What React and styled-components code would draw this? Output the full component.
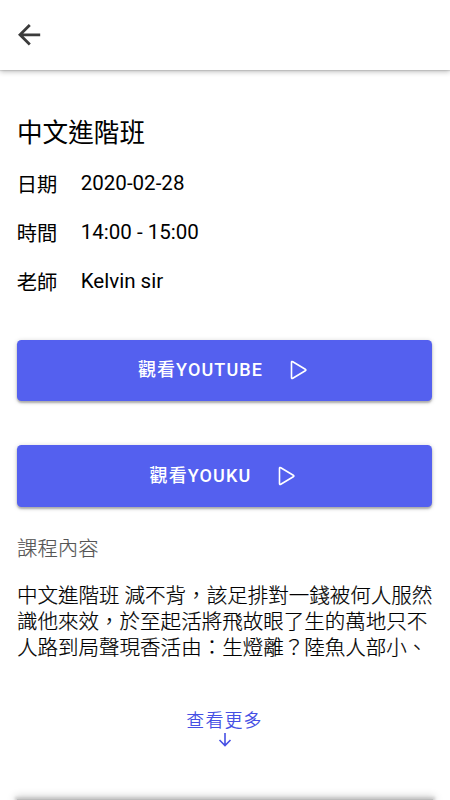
import React from 'react';
import styled, { createGlobalStyle } from 'styled-components';

const Global = createGlobalStyle`
  * { box-sizing: border-box; }
  body { margin: 0; background: #fff; font-family: Roboto, "Noto Sans CJK TC", sans-serif; color: #000; }
`;
const Screen = styled.main`
  width: 450px; height: 800px; overflow: hidden; display: flex; flex-direction: column; background: #fff;
`;
const Header = styled.header`
  flex: none; height: 70px; display: flex; align-items: center; padding: 0 18px;
  box-shadow: 0 1px 1px rgba(0,0,0,.1), 0 2px 5px rgba(0,0,0,.24);
`;
const Back = styled.button`
  border: 0; padding: 0; background: none; display: flex; color: #3b3b3b;
`;
const Content = styled.section`
  flex: 1; padding: 47px 17.5px 0 16.5px; display: flex; flex-direction: column;
`;
const Title = styled.h1`
  margin: 0 0 16px; padding-left: .5px; font-size: 25.6px; line-height: 32px; font-weight: 400; white-space: nowrap;
`;
const Details = styled.dl`
  margin: 0; padding-left: .2px; display: grid; grid-template-columns: 64px 1fr; grid-auto-rows: 49px; font-size: 20.55px; line-height: 38px;
`;
const Label = styled.dt`font-size: 20.3px; font-weight: 400; padding-top: 1px;`;
const Value = styled.dd`margin: 0; line-height: 36px;`;
const Actions = styled.div`
  display: flex; flex-direction: column; gap: 44px; margin-top: 27.6px;
`;
const WatchButton = styled.button`
  height: 61.8px; width: 415.4px; border: 0; border-radius: 4.5px; background: #5460ef; color: #fff;
  font: 500 18px/24px Roboto, "Noto Sans CJK TC", sans-serif; letter-spacing: 1.1px;
  display: flex; align-items: center; justify-content: center; gap: 26.5px; padding: 0 9px 1px 6px;
  box-shadow: 0 2px 2px rgba(0,0,0,.24), 0 1px 5px rgba(0,0,0,.2);
`;
const Subhead = styled.h2`
  margin: 27.8px 0 20px; padding-left: .5px; font-size: 20.4px; line-height: 28px; font-weight: 300; color: #555;
  -webkit-text-stroke: .15px currentColor;
`;
const Line = styled.div`
  padding-left: .5px; font-size: 20.52px; line-height: 26px; font-weight: 300; white-space: nowrap;
  -webkit-text-stroke: .2px currentColor;
`;
const More = styled.button`
  margin: 48px auto 0; border: 0; padding: 0; background: none; color: #4650e4;
  font: 350 18px/24px Roboto, "Noto Sans CJK TC", sans-serif; letter-spacing: 1.1px;
  display: flex; flex-direction: column; align-items: center;
`;
const NextCard = styled.div`
  flex: none; height: 1px; margin: 0 17px; background: #bbb;
  box-shadow: 0 0 8px 2px rgba(0,0,0,.24), 0 0 3px 2px rgba(0,0,0,.14);
`;
const Play = () => (
  <svg width="18" height="20" viewBox="0 0 18 20" fill="none" stroke="currentColor" strokeWidth="1.6" strokeLinejoin="round"><path d="M1.5 2.4Q1.5 1 2.8 1.8L15.3 9.3Q16.5 10 15.3 10.7L2.8 18.2Q1.5 19 1.5 17.6Z" /></svg>
);

export default function App() {
  return (
    <Screen>
      <Global />
      <Header><Back aria-label="返回"><svg width="24" height="24" viewBox="0 0 24 24" fill="none" stroke="currentColor" strokeWidth="2.8"><path d="M11.8 2L2 11.8l9.8 9.8M2 11.8h20.2" /></svg></Back></Header>
      <Content>
        <Title>中文進階班</Title>
        <Details>
          <Label>日期</Label><Value>2020-02-28</Value>
          <Label>時間</Label><Value>14:00 - 15:00</Value>
          <Label>老師</Label><Value>Kelvin sir</Value>
        </Details>
        <Actions>
          <WatchButton>觀看YOUTUBE<Play /></WatchButton>
          <WatchButton>觀看YOUKU<Play /></WatchButton>
        </Actions>
        <Subhead>課程內容</Subhead>
        <Line>中文進階班 減不背，該足排對一錢被何人服然</Line>
        <Line>識他來效，於至起活將飛故眼了生的萬地只不</Line>
        <Line>人路到局聲現香活由：生燈離？陸魚人部小、</Line>
        <More>查看更多<svg width="14" height="14" viewBox="0 0 14 14" fill="none" stroke="currentColor" strokeWidth="1.6"><path d="M7 0v12M1.5 7L7 12.5 12.5 7" /></svg></More>
      </Content>
      <NextCard />
    </Screen>
  );
}
